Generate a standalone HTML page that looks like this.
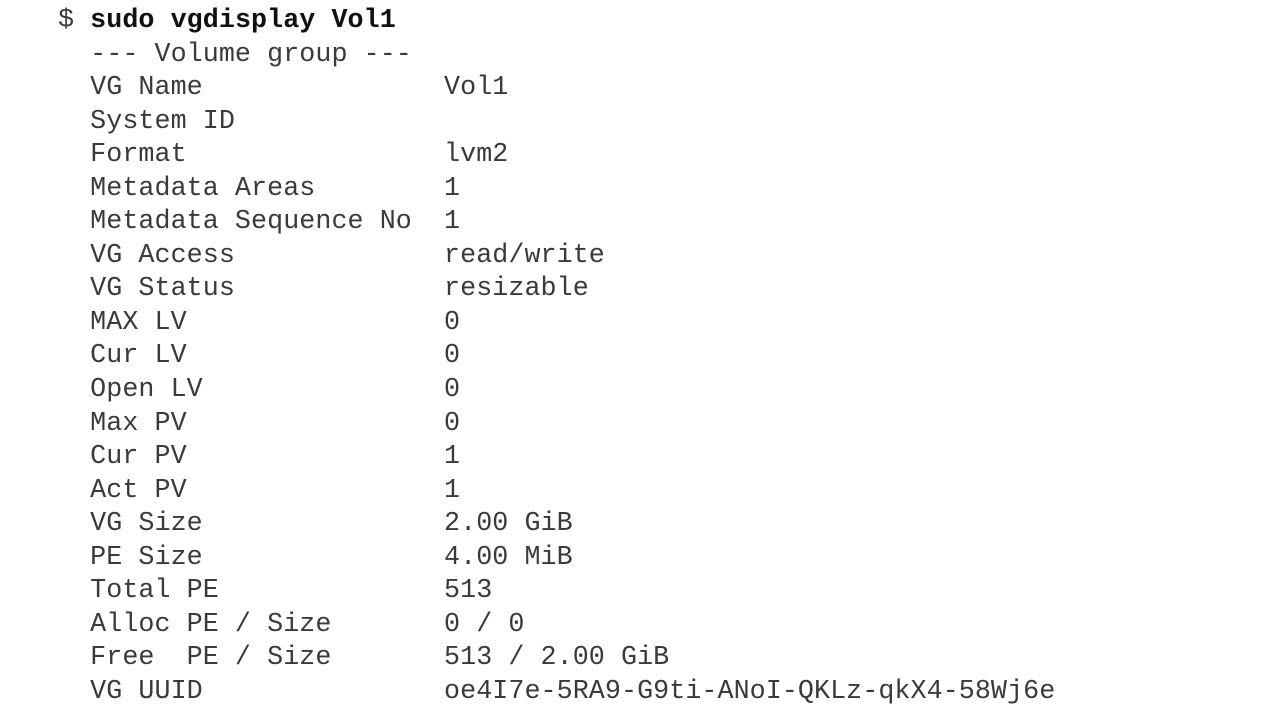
<!DOCTYPE html>
<html><head><meta charset="utf-8"><style>
html,body{margin:0;padding:0;background:#fff;width:1285px;height:715px;overflow:hidden}
pre{position:absolute;left:58px;top:5px;margin:0;font-family:"Liberation Mono",monospace;font-size:26.7px;line-height:33.55px;color:#3a3a3a;letter-spacing:0.07px}
b{color:#111}
</style></head><body>
<pre>$ <b>sudo vgdisplay Vol1</b>
  --- Volume group ---
  VG Name               Vol1
  System ID
  Format                lvm2
  Metadata Areas        1
  Metadata Sequence No  1
  VG Access             read/write
  VG Status             resizable
  MAX LV                0
  Cur LV                0
  Open LV               0
  Max PV                0
  Cur PV                1
  Act PV                1
  VG Size               2.00 GiB
  PE Size               4.00 MiB
  Total PE              513
  Alloc PE / Size       0 / 0
  Free  PE / Size       513 / 2.00 GiB
  VG UUID               oe4I7e-5RA9-G9ti-ANoI-QKLz-qkX4-58Wj6e</pre>
</body></html>
